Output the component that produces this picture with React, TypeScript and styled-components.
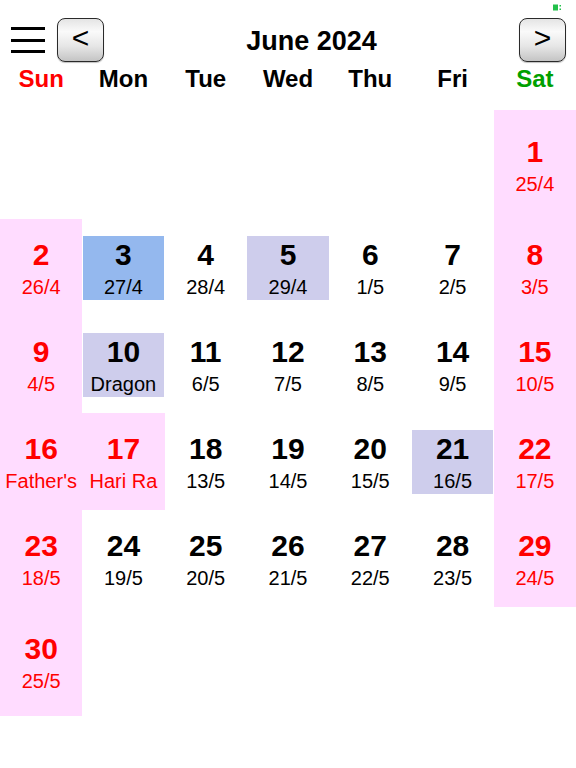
import React from "react";
import styled, { createGlobalStyle } from "styled-components";

const Global = createGlobalStyle`
  html, body { margin: 0; padding: 0; background: #ffffff; }
  body { font-family: "Liberation Sans", Arial, sans-serif; }
`;

const Page = styled.div`
  position: relative;
  width: 576px;
  height: 768px;
  background: #fff;
  overflow: hidden;
`;

const StatusIcon = styled.svg`
  position: absolute;
  top: 4px;
  right: 13px;
`;

const Header = styled.div`
  display: flex;
  align-items: center;
  padding: 18px 10px 0 11px;
  height: 44px;
`;

const Hamburger = styled.button`
  width: 34px;
  height: 26px;
  margin-right: 12px;
  padding: 0;
  border: none;
  background: transparent;
  display: flex;
  flex-direction: column;
  justify-content: space-between;
  span {
    display: block;
    height: 3px;
    background: #000;
  }
`;

const NavButton = styled.button`
  width: 47px;
  height: 44px;
  padding: 0 0 4px 0;
  border: 1.5px solid #2a2a2a;
  border-radius: 8px;
  background: linear-gradient(#e4e4e4 0%, #fafafa 30%, #e6e6e6 65%, #c4c4c4 100%);
  box-shadow: 0 1px 1px rgba(0, 0, 0, 0.25);
  font-family: "Liberation Sans", Arial, sans-serif;
  font-size: 30px;
  line-height: 1;
  color: #000;
  display: flex;
  align-items: center;
  justify-content: center;
`;

const Title = styled.div`
  flex: 1;
  text-align: center;
  font-size: 27px;
  font-weight: bold;
  color: #000;
  line-height: 32px;
  padding-top: 1px;
`;

const WeekRow = styled.div`
  display: grid;
  grid-template-columns: repeat(7, 1fr);
  padding: 3px 0 17px;
`;

const WeekName = styled.div<{ $color: string }>`
  text-align: center;
  font-size: 24px;
  font-weight: bold;
  line-height: 28px;
  color: ${(p) => p.$color};
`;

const Grid = styled.div`
  display: grid;
  grid-template-columns: repeat(7, 1fr);
  grid-template-rows: 109px repeat(4, 97px) 109px;
`;

const Cell = styled.div<{ $pink: boolean }>`
  background: ${(p) => (p.$pink ? "#ffdcff" : "transparent")};
  display: flex;
  align-items: center;
  justify-content: center;
`;

const Content = styled.div<{ $bg: string; $red: boolean }>`
  width: calc(100% - 1px);
  height: 64px;
  background: ${(p) => p.$bg};
  color: ${(p) => (p.$red ? "#ff0000" : "#000")};
  display: flex;
  flex-direction: column;
  align-items: center;
  white-space: nowrap;
`;

const DayNum = styled.div`
  font-size: 30px;
  font-weight: bold;
  line-height: 38px;
`;

const Lunar = styled.div`
  font-size: 20px;
  line-height: 26px;
`;

type Day = {
  d: number;
  lunar: string;
  holiday?: boolean;
  hl?: "today" | "mark";
};

const days: Day[] = [
  { d: 1, lunar: "25/4" },
  { d: 2, lunar: "26/4" },
  { d: 3, lunar: "27/4", hl: "today" },
  { d: 4, lunar: "28/4" },
  { d: 5, lunar: "29/4", hl: "mark" },
  { d: 6, lunar: "1/5" },
  { d: 7, lunar: "2/5" },
  { d: 8, lunar: "3/5" },
  { d: 9, lunar: "4/5" },
  { d: 10, lunar: "Dragon", hl: "mark" },
  { d: 11, lunar: "6/5" },
  { d: 12, lunar: "7/5" },
  { d: 13, lunar: "8/5" },
  { d: 14, lunar: "9/5" },
  { d: 15, lunar: "10/5" },
  { d: 16, lunar: "Father's" },
  { d: 17, lunar: "Hari Ra", holiday: true },
  { d: 18, lunar: "13/5" },
  { d: 19, lunar: "14/5" },
  { d: 20, lunar: "15/5" },
  { d: 21, lunar: "16/5", hl: "mark" },
  { d: 22, lunar: "17/5" },
  { d: 23, lunar: "18/5" },
  { d: 24, lunar: "19/5" },
  { d: 25, lunar: "20/5" },
  { d: 26, lunar: "21/5" },
  { d: 27, lunar: "22/5" },
  { d: 28, lunar: "23/5" },
  { d: 29, lunar: "24/5" },
  { d: 30, lunar: "25/5" },
];

const weekNames = [
  { n: "Sun", c: "#ff0000" },
  { n: "Mon", c: "#000" },
  { n: "Tue", c: "#000" },
  { n: "Wed", c: "#000" },
  { n: "Thu", c: "#000" },
  { n: "Fri", c: "#000" },
  { n: "Sat", c: "#00a000" },
];

const firstWeekday = 6; // June 1 2024 is Saturday

export default function App() {
  const cells: (Day | null)[] = [];
  for (let i = 0; i < firstWeekday; i++) cells.push(null);
  days.forEach((d) => cells.push(d));
  while (cells.length < 42) cells.push(null);

  return (
    <Page>
      <Global />
      <StatusIcon width="10" height="7" viewBox="0 0 10 7">
        <rect x="0" y="0.5" width="5" height="6" fill="#22c04a" />
        <rect x="6.5" y="1" width="1.5" height="1.5" fill="#22c04a" />
        <rect x="6.5" y="4.5" width="1.5" height="1.5" fill="#22c04a" />
      </StatusIcon>
      <Header>
        <Hamburger aria-label="menu">
          <span />
          <span />
          <span />
        </Hamburger>
        <NavButton>&lt;</NavButton>
        <Title>June 2024</Title>
        <NavButton>&gt;</NavButton>
      </Header>
      <WeekRow>
        {weekNames.map((w) => (
          <WeekName key={w.n} $color={w.c}>
            {w.n}
          </WeekName>
        ))}
      </WeekRow>
      <Grid>
        {cells.map((c, i) => {
          const col = i % 7;
          const weekend = col === 0 || col === 6;
          if (!c) return <Cell key={i} $pink={false} />;
          const red = weekend || !!c.holiday;
          const bg =
            c.hl === "today" ? "#94b8ee" : c.hl === "mark" ? "#cecdec" : "transparent";
          return (
            <Cell key={i} $pink={red}>
              <Content $bg={bg} $red={red}>
                <DayNum>{c.d}</DayNum>
                <Lunar>{c.lunar}</Lunar>
              </Content>
            </Cell>
          );
        })}
      </Grid>
    </Page>
  );
}
